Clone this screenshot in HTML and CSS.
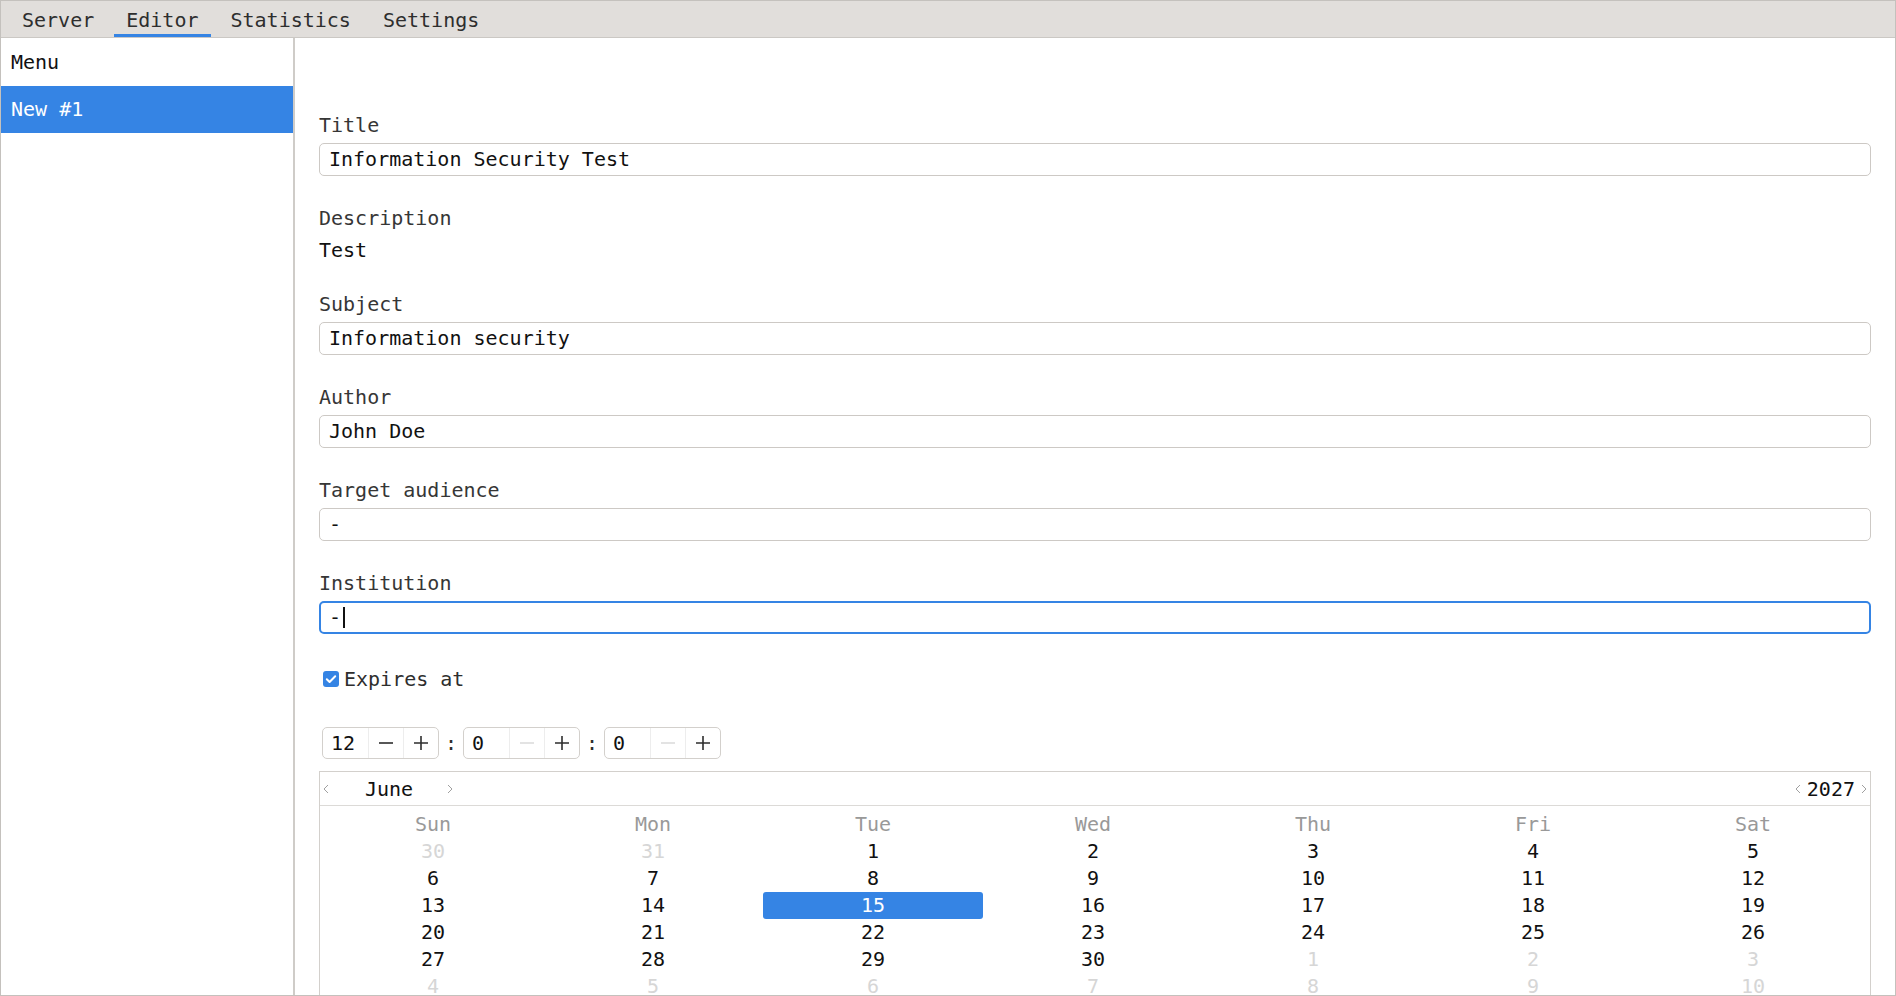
FILE: index.html
```html
<!DOCTYPE html>
<html>
<head>
<meta charset="utf-8">
<link rel="stylesheet" href="styles.css">
</head>
<body>
<div class="window">
  <div class="tabbar">
    <div class="tab">Server</div>
    <div class="tab active">Editor</div>
    <div class="tab">Statistics</div>
    <div class="tab">Settings</div>
  </div>
  <div class="panes">
    <aside class="sidebar">
      <div class="side-head">Menu</div>
      <div class="side-item active">New #1</div>
    </aside>
    <main class="content">
      <div class="field">
        <div class="label">Title</div>
        <div class="input">Information Security Test</div>
      </div>
      <div class="field">
        <div class="label">Description</div>
        <div class="value">Test</div>
      </div>
      <div class="field">
        <div class="label">Subject</div>
        <div class="input">Information security</div>
      </div>
      <div class="field">
        <div class="label">Author</div>
        <div class="input">John Doe</div>
      </div>
      <div class="field">
        <div class="label">Target audience</div>
        <div class="input">-</div>
      </div>
      <div class="field">
        <div class="label">Institution</div>
        <div class="input focused">-<span class="caret"></span></div>
      </div>
      <div class="check-row">
        <span class="checkbox"><svg width="16" height="16" viewBox="0 0 16 16"><path d="M3.8 8.2 L6.6 11 L12.2 5.2" fill="none" stroke="#fff" stroke-width="2" stroke-linecap="round" stroke-linejoin="round"/></svg></span>
        <span class="check-label">Expires at</span>
      </div>
      <div class="time-row">
        <div class="spin">
          <div class="spin-val">12</div>
          <div class="spin-btn"><svg width="16" height="16" viewBox="0 0 16 16"><path d="M1 8 H15" stroke="#2e2e2e" stroke-width="1.6"/></svg></div>
          <div class="spin-btn"><svg width="16" height="16" viewBox="0 0 16 16"><path d="M1 8 H15 M8 1 V15" stroke="#2e2e2e" stroke-width="1.6"/></svg></div>
        </div>
        <span class="colon">:</span>
        <div class="spin">
          <div class="spin-val">0</div>
          <div class="spin-btn"><svg width="16" height="16" viewBox="0 0 16 16"><path d="M1 8 H15" stroke="#dcdcdc" stroke-width="1.6"/></svg></div>
          <div class="spin-btn"><svg width="16" height="16" viewBox="0 0 16 16"><path d="M1 8 H15 M8 1 V15" stroke="#2e2e2e" stroke-width="1.6"/></svg></div>
        </div>
        <span class="colon">:</span>
        <div class="spin">
          <div class="spin-val">0</div>
          <div class="spin-btn"><svg width="16" height="16" viewBox="0 0 16 16"><path d="M1 8 H15" stroke="#dcdcdc" stroke-width="1.6"/></svg></div>
          <div class="spin-btn"><svg width="16" height="16" viewBox="0 0 16 16"><path d="M1 8 H15 M8 1 V15" stroke="#2e2e2e" stroke-width="1.6"/></svg></div>
        </div>
      </div>
      <div class="calendar">
        <div class="cal-header">
          <div class="cal-nav month">
            <span class="chev"><svg width="12" height="12" viewBox="0 0 12 12"><path d="M8 2 L4 6 L8 10" fill="none" stroke="#a0a0a0" stroke-width="1"/></svg></span>
            <span class="cal-month">June</span>
            <span class="chev next"><svg width="12" height="12" viewBox="0 0 12 12"><path d="M4 2 L8 6 L4 10" fill="none" stroke="#a0a0a0" stroke-width="1"/></svg></span>
          </div>
          <div class="cal-nav year">
            <span class="chev"><svg width="12" height="12" viewBox="0 0 12 12"><path d="M8 2 L4 6 L8 10" fill="none" stroke="#a0a0a0" stroke-width="1"/></svg></span>
            <span class="cal-year">2027</span>
            <span class="chev"><svg width="12" height="12" viewBox="0 0 12 12"><path d="M4 2 L8 6 L4 10" fill="none" stroke="#a0a0a0" stroke-width="1"/></svg></span>
          </div>
        </div>
        <div class="cal-grid">
          <div class="dow">Sun</div><div class="dow">Mon</div><div class="dow">Tue</div><div class="dow">Wed</div><div class="dow">Thu</div><div class="dow">Fri</div><div class="dow">Sat</div>
          <div class="day other">30</div><div class="day other">31</div><div class="day">1</div><div class="day">2</div><div class="day">3</div><div class="day">4</div><div class="day">5</div>
          <div class="day">6</div><div class="day">7</div><div class="day">8</div><div class="day">9</div><div class="day">10</div><div class="day">11</div><div class="day">12</div>
          <div class="day">13</div><div class="day">14</div><div class="day selected">15</div><div class="day">16</div><div class="day">17</div><div class="day">18</div><div class="day">19</div>
          <div class="day">20</div><div class="day">21</div><div class="day">22</div><div class="day">23</div><div class="day">24</div><div class="day">25</div><div class="day">26</div>
          <div class="day">27</div><div class="day">28</div><div class="day">29</div><div class="day">30</div><div class="day other">1</div><div class="day other">2</div><div class="day other">3</div>
          <div class="day other">4</div><div class="day other">5</div><div class="day other">6</div><div class="day other">7</div><div class="day other">8</div><div class="day other">9</div><div class="day other">10</div>
        </div>
      </div>
    </main>
  </div>
</div>
</body>
</html>
```

FILE: styles.css
```css
* { box-sizing: border-box; }
html, body { margin: 0; padding: 0; }
body {
  font-family: "DejaVu Sans Mono", "Liberation Mono", monospace;
  font-size: 20px;
  color: #1a1a1a;
  background: #ffffff;
}
.window {
  width: 1896px;
  height: 996px;
  border: 1px solid #c4c1bd;
  display: flex;
  flex-direction: column;
  overflow: hidden;
  background: #ffffff;
}
.tabbar {
  height: 37px;
  flex: none;
  background: #e1dedb;
  border-bottom: 1px solid #cbc8c4;
  display: flex;
  gap: 8px;
  padding-left: 9px;
}
.tab {
  height: 36px;
  line-height: 38px;
  padding: 0 12px;
  color: #2e2e2e;
}
.tab.active {
  box-shadow: inset 0 -3px 0 #3584e4;
}
.panes {
  flex: 1;
  display: flex;
  min-height: 0;
}
.sidebar {
  width: 294px;
  flex: none;
  border-right: 2px solid #cfccc8;
  background: #ffffff;
}
.side-head {
  height: 48px;
  line-height: 48px;
  padding-left: 10px;
  color: #111;
}
.side-item {
  height: 47px;
  line-height: 47px;
  padding-left: 10px;
}
.side-item.active {
  background: #3584e4;
  color: #ffffff;
}
.content {
  flex: 1;
  min-width: 0;
  padding: 75px 24px 0 24px;
  overflow: hidden;
}
.field {
  margin-bottom: 30px;
}
.label {
  height: 24px;
  line-height: 24px;
  margin-bottom: 6px;
  color: #363636;
}
.value {
  height: 24px;
  line-height: 24px;
  margin-top: 8px;
  color: #111;
}
.input {
  height: 33px;
  line-height: 31px;
  border: 1px solid #cdc9c5;
  border-radius: 5px;
  padding: 0 9px;
  color: #111;
  background: #ffffff;
  white-space: pre;
}
.input.focused {
  border: 2px solid #3584e4;
  line-height: 29px;
  padding: 0 8px;
}
.caret {
  display: inline-block;
  width: 2px;
  height: 21px;
  background: #111;
  vertical-align: -4px;
  margin-left: 2px;
}
.check-row {
  margin-top: 33px;
  height: 24px;
  display: flex;
  align-items: center;
}
.checkbox {
  width: 16px;
  height: 16px;
  margin-left: 4px;
  margin-right: 5px;
  border-radius: 3px;
  background: #3584e4;
  display: flex;
}
.check-label {
  line-height: 24px;
  color: #2e2e2e;
}
.time-row {
  margin-top: 36px;
  display: flex;
  align-items: center;
  padding-left: 3px;
}
.spin {
  display: flex;
  height: 32px;
  border: 1px solid #d3d0cc;
  border-radius: 5px;
}
.spin-val {
  width: 45px;
  line-height: 30px;
  padding-left: 8px;
  color: #111;
}
.spin-btn {
  width: 35px;
  border-left: 1px solid #ededed;
  display: flex;
  align-items: center;
  justify-content: center;
}
.colon {
  width: 12px;
  margin: 0 6px;
  text-align: center;
  color: #2e2e2e;
}
.calendar {
  margin-top: 12px;
  border: 1px solid #d3d0cc;
  height: 260px;
}
.cal-header {
  height: 34px;
  border-bottom: 1px solid #dcdad7;
  display: flex;
  align-items: center;
  justify-content: space-between;
}
.cal-nav {
  display: flex;
  align-items: center;
}
.chev {
  width: 12px;
  height: 12px;
  display: flex;
}
.cal-month {
  margin-left: 33px;
  margin-right: 31px;
  color: #111;
}
.cal-year {
  margin: 0 3px;
  color: #111;
}
.cal-grid {
  display: grid;
  grid-template-columns: repeat(7, 220px);
  grid-auto-rows: 27px;
  padding: 5px 7px 0 3px;
}
.dow, .day {
  line-height: 27px;
  text-align: center;
}
.dow {
  color: #999999;
}
.day {
  color: #111;
}
.day.other {
  color: #d6d6d6;
}
.day.selected {
  background: #3584e4;
  color: #ffffff;
  border-radius: 3px;
}
```
